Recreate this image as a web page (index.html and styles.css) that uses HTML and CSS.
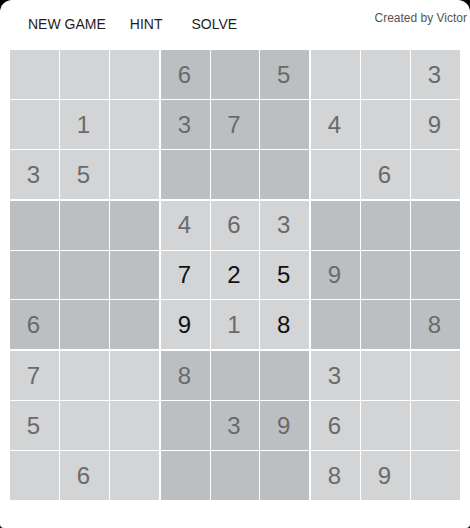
FILE: index.html
```html
<!DOCTYPE html>
<html lang="en-US">
<head>
	<meta charset="UTF-8">
	<meta name="viewport" content="width=device-width, initial-scale=1.0">
    <title>Sudoku</title>
    <link rel="stylesheet" href="styles.css">
</head>
<body>
  <div class="page">
    <div class="top-bar">
      <div class="menu">
        <button class="menu-btn">NEW GAME</button>
        <button class="menu-btn">HINT</button>
        <button class="menu-btn solve">SOLVE</button>
      </div>
      <p class="credit">Created by Victor</p>
    </div>

    <div class="board">
      <div class="box light">
        <div class="cell"></div><div class="cell"></div><div class="cell"></div>
        <div class="cell"></div><div class="cell">1</div><div class="cell"></div>
        <div class="cell">3</div><div class="cell">5</div><div class="cell"></div>
      </div>
      <div class="box dark">
        <div class="cell">6</div><div class="cell"></div><div class="cell">5</div>
        <div class="cell">3</div><div class="cell">7</div><div class="cell"></div>
        <div class="cell"></div><div class="cell"></div><div class="cell"></div>
      </div>
      <div class="box light">
        <div class="cell"></div><div class="cell"></div><div class="cell">3</div>
        <div class="cell">4</div><div class="cell"></div><div class="cell">9</div>
        <div class="cell"></div><div class="cell">6</div><div class="cell"></div>
      </div>

      <div class="box dark">
        <div class="cell"></div><div class="cell"></div><div class="cell"></div>
        <div class="cell"></div><div class="cell"></div><div class="cell"></div>
        <div class="cell">6</div><div class="cell"></div><div class="cell"></div>
      </div>
      <div class="box light">
        <div class="cell">4</div><div class="cell">6</div><div class="cell">3</div>
        <div class="cell user">7</div><div class="cell user">2</div><div class="cell user">5</div>
        <div class="cell user">9</div><div class="cell">1</div><div class="cell user">8</div>
      </div>
      <div class="box dark">
        <div class="cell"></div><div class="cell"></div><div class="cell"></div>
        <div class="cell">9</div><div class="cell"></div><div class="cell"></div>
        <div class="cell"></div><div class="cell"></div><div class="cell">8</div>
      </div>

      <div class="box light">
        <div class="cell">7</div><div class="cell"></div><div class="cell"></div>
        <div class="cell">5</div><div class="cell"></div><div class="cell"></div>
        <div class="cell"></div><div class="cell">6</div><div class="cell"></div>
      </div>
      <div class="box dark">
        <div class="cell">8</div><div class="cell"></div><div class="cell"></div>
        <div class="cell"></div><div class="cell">3</div><div class="cell">9</div>
        <div class="cell"></div><div class="cell"></div><div class="cell"></div>
      </div>
      <div class="box light">
        <div class="cell">3</div><div class="cell"></div><div class="cell"></div>
        <div class="cell">6</div><div class="cell"></div><div class="cell"></div>
        <div class="cell">8</div><div class="cell">9</div><div class="cell"></div>
      </div>
    </div>
  </div>
</body>
</html>
```

FILE: styles.css
```css
    /* page frame */
    html {
        background: #000000;
    }
    body {
        margin: 0;
        font-family: "Liberation Sans", Arial, sans-serif;
    }
    .page {
        height: 528px;
        background: #ffffff;
        border-radius: 12px 12px 4px 4px;
        padding: 0 10px;
        box-sizing: border-box;
    }

    /* top bar */
    .top-bar {
        display: flex;
        justify-content: space-between;
        height: 50px;
    }
    .menu {
        display: flex;
        align-items: center;
        gap: 24px;
        padding-left: 18px;
        padding-bottom: 2px;
    }
    .menu-btn {
        border: none;
        background: none;
        padding: 0;
        font-family: inherit;
        font-size: 14px;
        color: #1e1e1e;
    }
    .menu-btn.solve {
        margin-left: 5px;
    }
    .credit {
        margin: 11px -7px 0 0;
        font-size: 12px;
        color: #555555;
    }

    /* board */
    .board {
        display: grid;
        grid-template-columns: 149px 148px 149px;
        grid-template-rows: 149px 148px 149px;
        gap: 2px;
        width: 450px;
        background: #ffffff;
    }
    .box {
        display: grid;
        grid-template-columns: repeat(3, 1fr);
        grid-template-rows: repeat(3, 1fr);
        gap: 1px;
    }
    .cell {
        display: flex;
        align-items: center;
        justify-content: center;
        padding-right: 2px;
        font-size: 24px;
        color: #6a6a6a;
    }
    .box.light .cell {
        background: #d3d4d6;
    }
    .box.dark .cell {
        background: #bcbfc2;
    }
    .cell.user {
        color: #111111;
    }
```
